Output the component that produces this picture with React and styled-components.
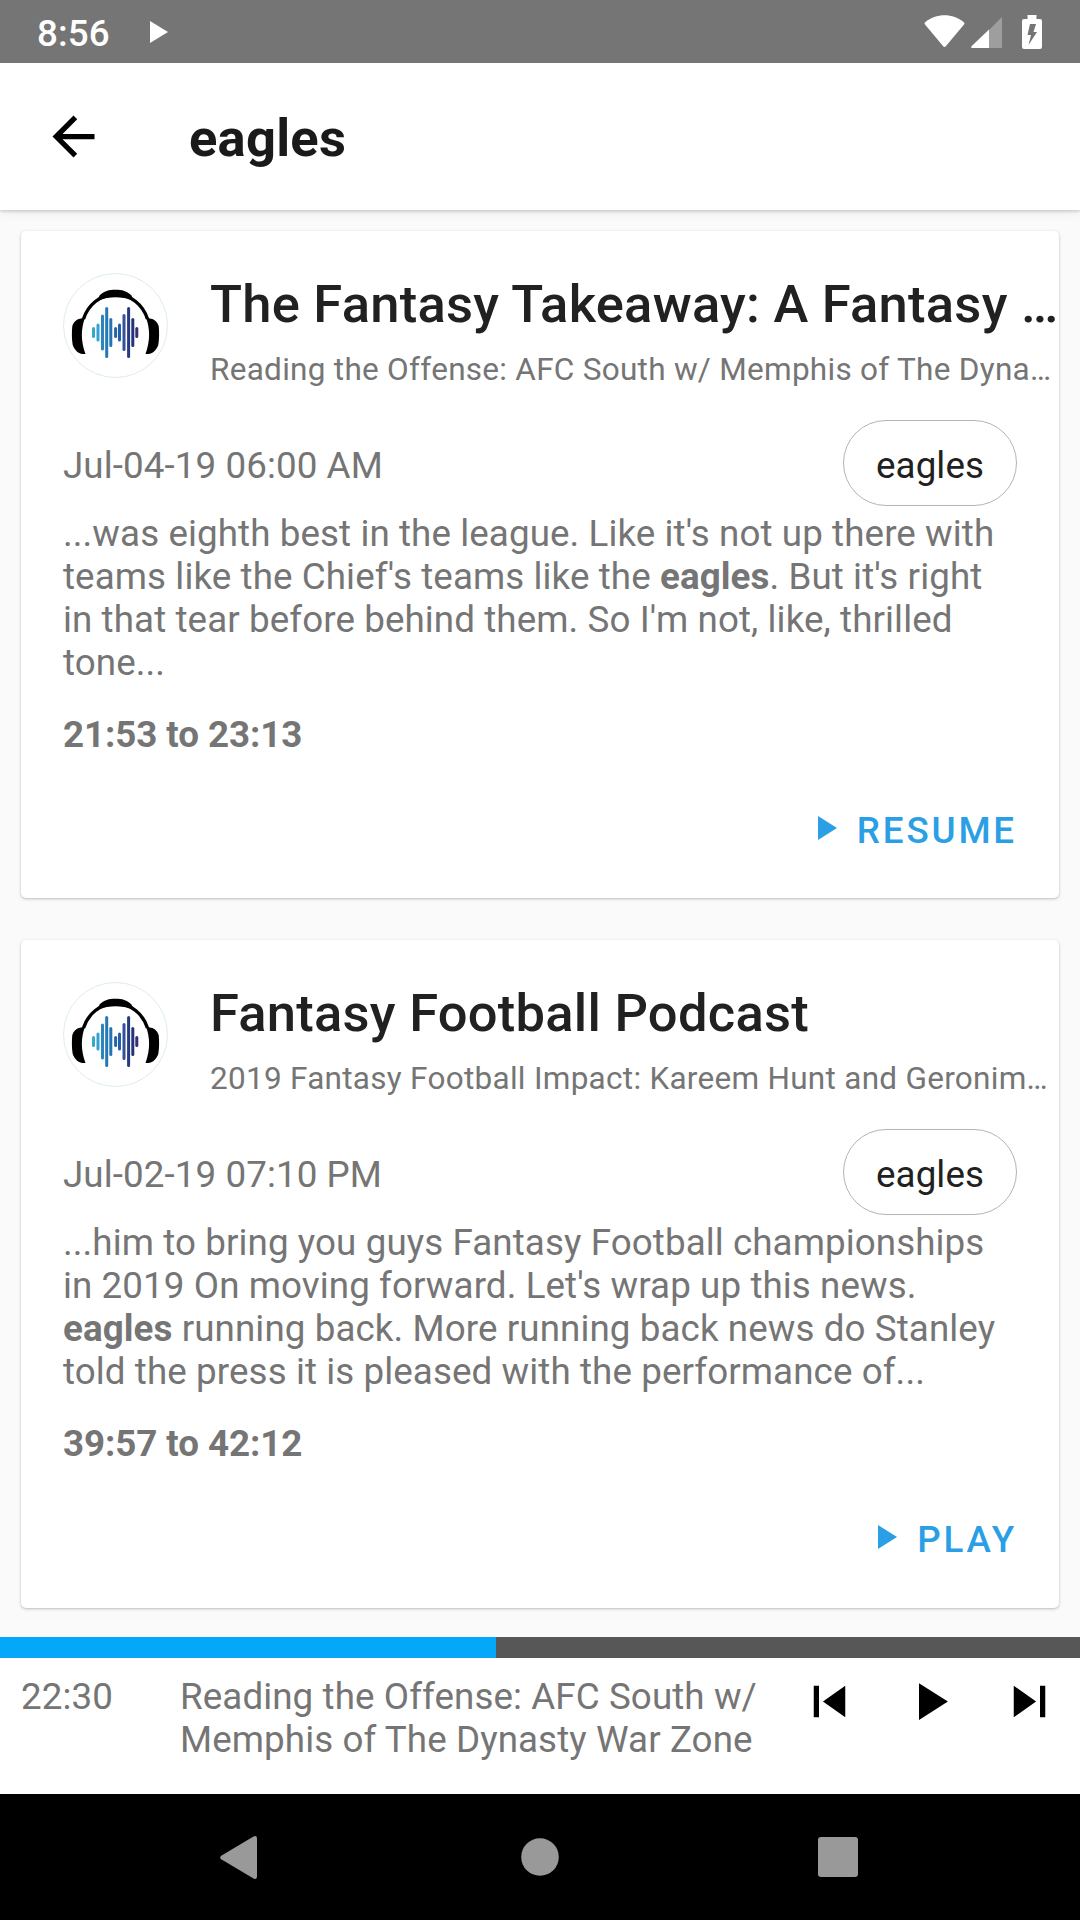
import styled, { createGlobalStyle } from "styled-components";

const episodes = [
  {
    id: 1,
    title: "The Fantasy Takeaway: A Fantasy …",
    subtitle: "Reading the Offense: AFC South w/ Memphis of The Dyna…",
    date: "Jul-04-19 06:00 AM",
    tag: "eagles",
    lines: [
      "...was eighth best in the league. Like it's not up there with",
      <>teams like the Chief's teams like the <b>eagles</b>. But it's right</>,
      "in that tear before behind them. So I'm not, like, thrilled",
      "tone...",
    ],
    range: "21:53 to 23:13",
    action: "Resume",
  },
  {
    id: 2,
    title: "Fantasy Football Podcast",
    subtitle: "2019 Fantasy Football Impact: Kareem Hunt and Geronim…",
    date: "Jul-02-19 07:10 PM",
    tag: "eagles",
    lines: [
      "...him to bring you guys Fantasy Football championships",
      "in 2019 On moving forward. Let's wrap up this news.",
      <><b>eagles</b> running back. More running back news do Stanley</>,
      "told the press it is pleased with the performance of...",
    ],
    range: "39:57 to 42:12",
    action: "Play",
  },
];

// x, height and colour of every bar in the sound wave
const bars = [
  [30.5, 11, "#35a8d0"],
  [35, 18, "#35a0d2"],
  [39.5, 36, "#2a86bd"],
  [43.7, 51, "#2478b5"],
  [47.8, 29, "#2474b4"],
  [52.6, 11, "#2465a8"],
  [56.5, 18, "#2460a6"],
  [61, 37, "#34519a"],
  [65.6, 51, "#263a80"],
  [69.8, 29, "#28327a"],
  [73.8, 11, "#382f72"],
];

const PodcastLogo = () => (
  <Avatar viewBox="0 0 105 105">
    <circle cx="52.5" cy="52.5" r="52" fill="#fff" stroke="#d3e6ec" strokeWidth="0.8" />
    <path d="M20.500 46C25 32 37 21.500 52.500 21.500S80 32 84.500 46" fill="none" stroke="#000" strokeWidth="3.4" />
    <path d="M36.500 22.500C41 18 46 16.800 52.500 16.800S64 18 68.500 22.500L70 27C64 25 58 24.200 52.500 24.200S41 25 35 27.500Z" />
    <path d="M22 44.500C18 56 17.500 67 22.500 81C16 81.500 12 78 9.700 72C8.700 66 8.700 59 9.300 53C11 48.500 13.500 46.500 17 45.800Z" />
    <path d="M83 44.500C87 56 87.500 67 82.500 81C89 81.500 93 78 95.300 72C96.300 66 96.300 59 95.700 53C94 48.500 91.500 46.500 88 45.800Z" />
    {bars.map(([x, h, color]) => (
      <rect key={x} x={x - 1.5} y={59.5 - h / 2} width="3" height={h} rx="1.5" fill={color} />
    ))}
  </Avatar>
);

const PlayIcon = ({ size }) => (
  <svg width={size} height={size} viewBox="0 0 24 24" fill="currentColor">
    <path d="M8 5v14l11-7z" />
  </svg>
);

const EpisodeCard = ({ episode }) => (
  <Card>
    <CardHeader>
      <PodcastLogo />
      <Heading>
        <Title>{episode.title}</Title>
        <Subtitle>{episode.subtitle}</Subtitle>
      </Heading>
    </CardHeader>
    <MetaRow>
      <span>{episode.date}</span>
      <Chip>{episode.tag}</Chip>
    </MetaRow>
    <Transcript>
      {episode.lines.map((line, i) => <p key={i}>{line}</p>)}
    </Transcript>
    <Range>{episode.range}</Range>
    <Actions>
      <ActionButton>
        <svg width="19" height="24" viewBox="0 0 19 24" fill="currentColor">
          <path d="M0 0v24l19-12z" />
        </svg>
        {episode.action}
      </ActionButton>
    </Actions>
  </Card>
);

const App = () => {
  return (<Screen>
    <GlobalStyle />
    <StatusBar>
      <Clock>8:56</Clock>
      <svg width="18" height="22" viewBox="0 0 18 22" fill="#fff">
        <path d="M0 0v22l18-11z" />
      </svg>
      <StatusIcons>
        <svg width="41" height="33" viewBox="0 0 41 33" fill="#fff">
          <path d="M1.200 7.200C12-2 29-2 39.800 7.200Q41 8.300 40 9.500L22 31Q20.500 33 19 31L1 9.500Q0 8.300 1.200 7.200Z" />
        </svg>
        <svg width="31" height="31" viewBox="0 0 31 31" fill="#fff">
          <path d="M31 0V31H18V13Z" fillOpacity="0.3" />
          <path d="M18 12.500V31H1.500Q-1 31 .8 29Z" />
        </svg>
        <svg width="20" height="34" viewBox="0 0 20 34">
          <path d="M5.500 0h9v4H18q2 0 2 2v26q0 2-2 2H2q-2 0-2-2V6q0-2 2-2h3.500z" fill="#fff" />
          <path d="M8 9h6l-2.500 8H15L6.500 30 9 20H5.500z" fill="#757575" />
        </svg>
      </StatusIcons>
    </StatusBar>
    <AppBar>
      <svg width="63" height="63" viewBox="0 0 24 24">
        <path d="M20 11H7.830l5.590-5.590L12 4l-8 8 8 8 1.410-1.410L7.830 13H20v-2z" />
      </svg>
      <h1>eagles</h1>
    </AppBar>
    <List>
      {episodes.map(episode => <EpisodeCard key={episode.id} episode={episode} />)}
    </List>
    <Progress>
      <ProgressFill />
    </Progress>
    <Player>
      <Elapsed>22:30</Elapsed>
      <NowPlaying>
        Reading the Offense: AFC South w/<br />Memphis of The Dynasty War Zone
      </NowPlaying>
      <Controls>
        <svg width="63" height="63" viewBox="0 0 24 24">
          <path d="M6 6h2v12H6zm3.500 6l8.500 6V6z" />
        </svg>
        <PlayIcon size={63} />
        <svg width="63" height="63" viewBox="0 0 24 24">
          <path d="M6 18l8.500-6L6 6v12zM16 6v12h2V6h-2z" />
        </svg>
      </Controls>
    </Player>
    <NavBar>
      <svg width="37" height="43" viewBox="0 0 37 43">
        <path d="M33.500.6Q37-1 37 2.500v38Q37 44 33.500 42.400L1.200 23.300Q-.8 21.500 1.200 19.700Z" />
      </svg>
      <svg width="38" height="38" viewBox="0 0 38 38">
        <circle cx="19" cy="19" r="18.800" />
      </svg>
      <svg width="40" height="40" viewBox="0 0 40 40">
        <rect width="40" height="40" rx="3" />
      </svg>
    </NavBar>
  </Screen>
  );
}

export default App;

const GlobalStyle = createGlobalStyle`
* {
  box-sizing: border-box;
}
body {
  margin: 0;
  font-family: Roboto, sans-serif;
  font-size: 36.75px;
  letter-spacing: 0.09px;
  color: #757575;
}
svg {
  display: block;
  flex-shrink: 0;
}
h1, h2, h3, p {
  margin: 0;
  white-space: nowrap;
}
`

const Screen = styled.div`
width: 1080px;
height: 1920px;
display: flex;
flex-direction: column;
background: #fafafa;
overflow: hidden;
`

const StatusBar = styled.header`
height: 63px;
flex-shrink: 0;
display: flex;
align-items: center;
padding: 0 38px 0 37px;
background: #757575;
color: #fff;
`

const Clock = styled.span`
width: 113px;
padding-top: 3px;
font-weight: 500;
`

const StatusIcons = styled.div`
display: flex;
align-items: center;
margin-left: auto;
svg:nth-child(2) {
  margin: 2px 20px 0 6px;
}
`

const AppBar = styled.div`
height: 147px;
flex-shrink: 0;
display: flex;
align-items: center;
padding-left: 42px;
background: #fff;
box-shadow: 0 2px 2px rgba(0, 0, 0, 0.12), 0 4px 10px rgba(0, 0, 0, 0.06);
h1 {
  margin-left: 84px;
  padding-top: 3px;
  font-size: 52.5px;
  font-weight: 700;
  letter-spacing: 0.25px;
  color: #1a1a1a;
}
`

const List = styled.main`
height: 1427px;
flex-shrink: 0;
display: flex;
flex-direction: column;
gap: 42px;
padding: 21px;
`

const Card = styled.section`
height: 667px;
flex-shrink: 0;
padding-top: 42px;
background: #fff;
border-radius: 5px;
box-shadow: 0 1px 3px rgba(0, 0, 0, 0.26);
&:last-child {
  height: 668px;
}
`

const CardHeader = styled.div`
display: flex;
gap: 42px;
height: 147px;
padding-left: 42px;
`

const Avatar = styled.svg`
width: 105px;
height: 105px;
`

const Heading = styled.div`
min-width: 0;
`

const Title = styled.h2`
font-size: 52.5px;
line-height: 62px;
font-weight: 500;
letter-spacing: 0.25px;
color: #212121;
`

const Subtitle = styled.h3`
margin-top: 16px;
font-size: 31.5px;
line-height: 38px;
font-weight: 400;
letter-spacing: 0.28px;
`

const MetaRow = styled.div`
display: flex;
align-items: center;
justify-content: space-between;
height: 86px;
padding: 0 42px;
span {
  padding-top: 4px;
}
`

const Chip = styled.div`
width: 174px;
height: 86px;
padding-top: 4px;
display: flex;
align-items: center;
justify-content: center;
border: 1px solid #b4b4b4;
border-radius: 43px;
color: #212121;
`

const Transcript = styled.div`
padding: 6px 42px 0;
line-height: 43px;
b {
  font-weight: 700;
}
`

const Range = styled.p`
margin-top: 29px;
padding-left: 42px;
line-height: 43px;
font-weight: 700;
letter-spacing: -0.08px;
`

const Actions = styled.div`
display: flex;
justify-content: flex-end;
padding: 53px 42px 0;
`

const ActionButton = styled.div`
display: flex;
align-items: center;
gap: 20px;
line-height: 43px;
font-weight: 500;
letter-spacing: 2.85px;
text-transform: uppercase;
color: #2a9fe5;
svg {
  margin-bottom: 5px;
}
`

const Progress = styled.div`
height: 21px;
flex-shrink: 0;
background: #575757;
`

const ProgressFill = styled.div`
width: 496px;
height: 21px;
background: #05a8f8;
`

const Player = styled.footer`
height: 136px;
flex-shrink: 0;
display: flex;
padding: 12px 19px 0 21px;
background: #fff;
line-height: 43px;
`

const Elapsed = styled.div`
width: 159px;
padding-top: 5px;
`

const NowPlaying = styled.div`
padding-top: 5px;
white-space: nowrap;
`

const Controls = styled.div`
display: flex;
gap: 37px;
margin-left: auto;
fill: #000;
color: #000;
`

const NavBar = styled.nav`
height: 126px;
flex-shrink: 0;
display: flex;
align-items: center;
justify-content: space-between;
padding: 0 222px 0 220px;
background: #000;
fill: #999;
svg:nth-child(2) {
  margin-left: 4px;
}
`
